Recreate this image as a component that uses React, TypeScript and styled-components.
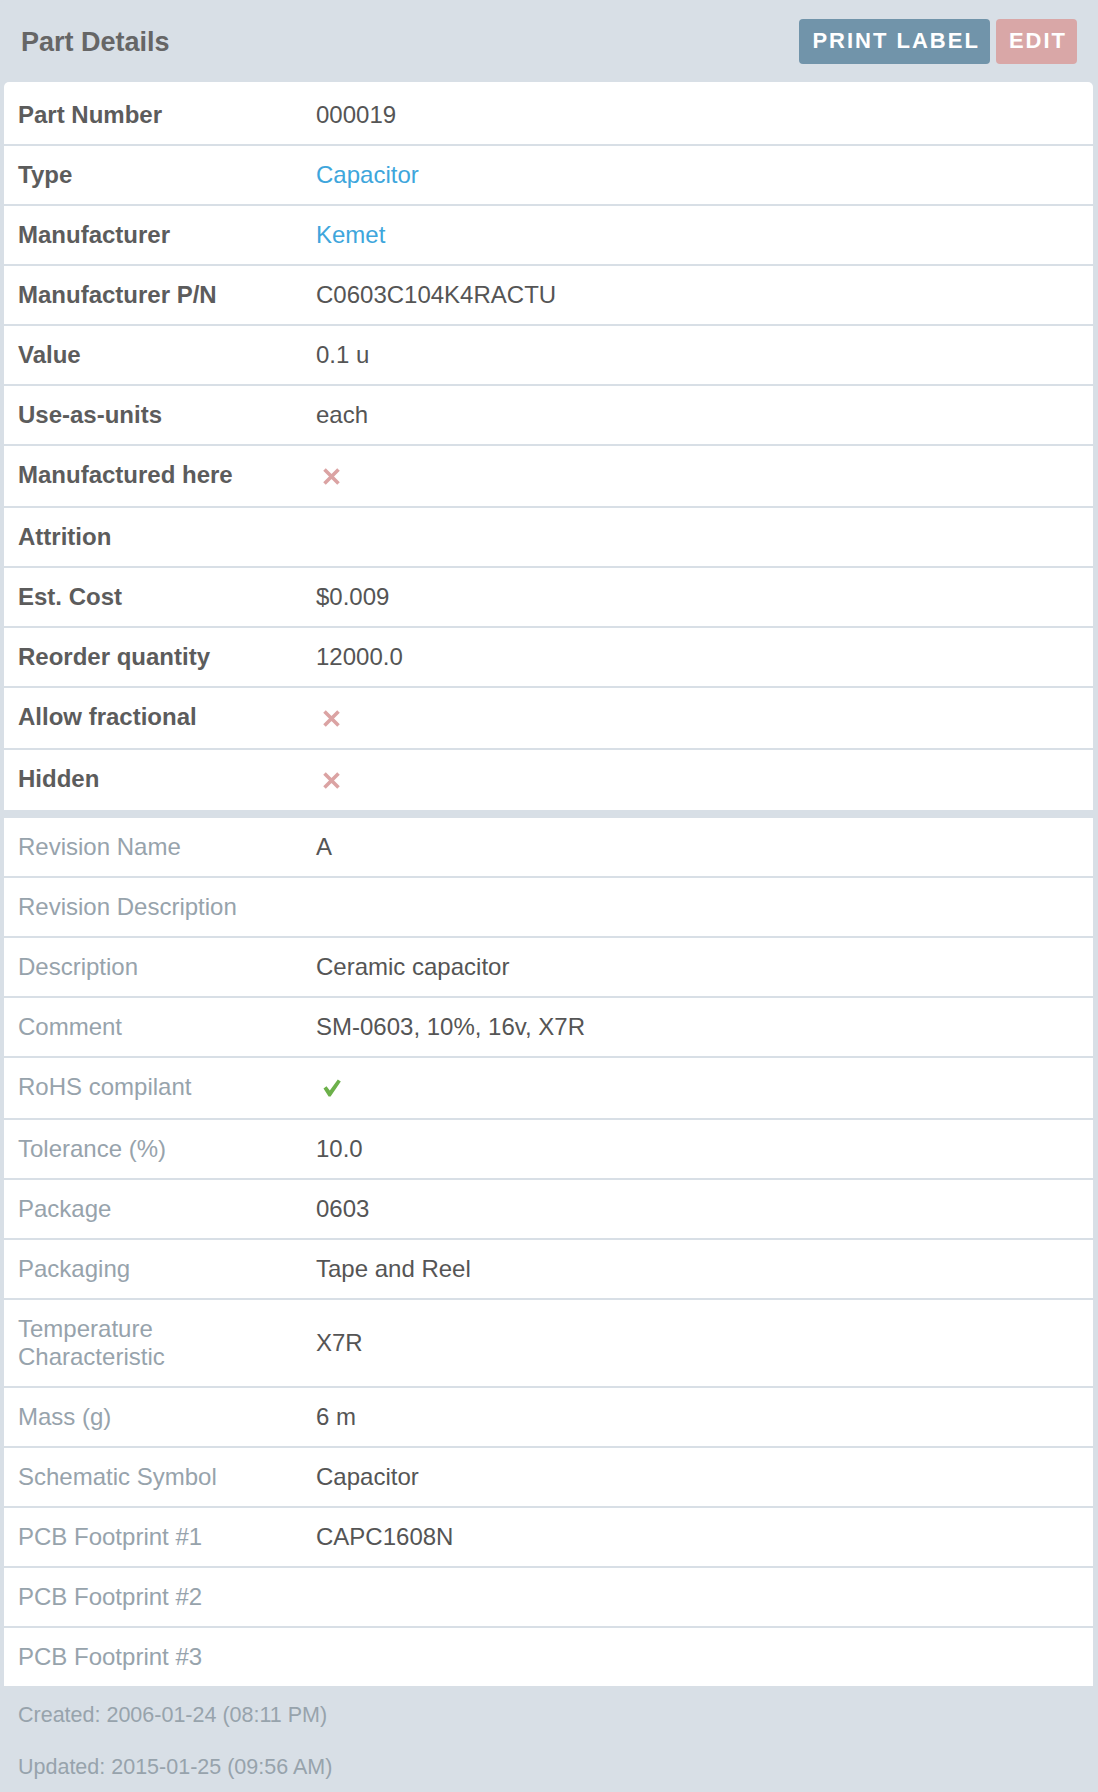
import styled, { createGlobalStyle } from "styled-components";

const GlobalStyle = createGlobalStyle`
  html, body {
    margin: 0;
    padding: 0;
    background: #d8dfe6;
  }
  body {
    font-family: "Liberation Sans", Arial, sans-serif;
  }
`;

const Panel = styled.section`
  background: #d8dfe6;
  border-radius: 6px 6px 0 0;
  padding: 0 5px 0 4px;
`;

const Header = styled.header`
  display: flex;
  align-items: center;
  justify-content: space-between;
  height: 82px;
  padding: 0 16px 0 17px;
  box-sizing: border-box;
`;

const Title = styled.h2`
  margin: 2px 0 0;
  font-size: 27px;
  font-weight: bold;
  color: #666;
`;

const Actions = styled.div`
  display: flex;
  gap: 6px;
`;

const Button = styled.button<{ $variant: "info" | "danger" }>`
  height: 45px;
  padding: 0 10px 0 13px;
  border: none;
  border-radius: 4px;
  background: ${(p) => (p.$variant === "info" ? "#7194aa" : "#d9a7a7")};
  color: #fff;
  font-family: "Liberation Sans", Arial, sans-serif;
  font-size: 22px;
  font-weight: bold;
  letter-spacing: 2px;
  cursor: pointer;
`;

const Table = styled.div<{ $first?: boolean }>`
  background: #fff;
  border-radius: ${(p) => (p.$first ? "5px 5px 0 0" : "0")};
  padding-top: ${(p) => (p.$first ? "4px" : "0")};
  margin-bottom: 6px;
`;

const Row = styled.div`
  display: grid;
  grid-template-columns: 298px 1fr;
  border-bottom: 2px solid #d8dfe6;
`;

const Label = styled.div<{ $muted?: boolean }>`
  padding: 15px 14px;
  line-height: 28px;
  font-size: 24px;
  font-weight: ${(p) => (p.$muted ? "normal" : "bold")};
  color: ${(p) => (p.$muted ? "#97a3ac" : "#5c5c5c")};
`;

const Value = styled.div`
  display: flex;
  align-items: center;
  padding: 15px 14px;
  line-height: 28px;
  font-size: 24px;
  color: #555;
`;

const ValueLink = styled.a`
  color: #3ea6dc;
  text-decoration: none;
`;

const IconBox = styled.span`
  display: flex;
  align-items: center;
  height: 30px;
  padding-left: 6px;
`;

const Footer = styled.footer`
  padding: 6px 14px 12px;
`;

const Stamp = styled.p`
  margin: 0 0 22px;
  line-height: 30px;
  font-size: 21.5px;
  color: #97a3ac;
`;

type Kind = "text" | "link" | "no" | "yes";
type Field = { label: string; value?: string; kind?: Kind };

const partFields: Field[] = [
  { label: "Part Number", value: "000019" },
  { label: "Type", value: "Capacitor", kind: "link" },
  { label: "Manufacturer", value: "Kemet", kind: "link" },
  { label: "Manufacturer P/N", value: "C0603C104K4RACTU" },
  { label: "Value", value: "0.1 u" },
  { label: "Use-as-units", value: "each" },
  { label: "Manufactured here", kind: "no" },
  { label: "Attrition" },
  { label: "Est. Cost", value: "$0.009" },
  { label: "Reorder quantity", value: "12000.0" },
  { label: "Allow fractional", kind: "no" },
  { label: "Hidden", kind: "no" },
];

const revisionFields: Field[] = [
  { label: "Revision Name", value: "A" },
  { label: "Revision Description" },
  { label: "Description", value: "Ceramic capacitor" },
  { label: "Comment", value: "SM-0603, 10%, 16v, X7R" },
  { label: "RoHS compilant", kind: "yes" },
  { label: "Tolerance (%)", value: "10.0" },
  { label: "Package", value: "0603" },
  { label: "Packaging", value: "Tape and Reel" },
  { label: "Temperature Characteristic", value: "X7R" },
  { label: "Mass (g)", value: "6 m" },
  { label: "Schematic Symbol", value: "Capacitor" },
  { label: "PCB Footprint #1", value: "CAPC1608N" },
  { label: "PCB Footprint #2" },
  { label: "PCB Footprint #3" },
];

const CrossIcon = () => (
  <svg width="19" height="19" viewBox="0 0 19 19">
    <path
      d="M2.5 2.5 L16.5 16.5 M16.5 2.5 L2.5 16.5"
      stroke="#dba3a3"
      strokeWidth="3.6"
    />
  </svg>
);

const CheckIcon = () => (
  <svg width="20" height="20" viewBox="0 0 20 20">
    <path
      d="M1.5 10.5 L4.5 8.2 L7.8 12.6 L15.8 1.5 L18.8 3.6 L8.6 18.5 L6.6 18.5 Z"
      fill="#6cb04a"
    />
  </svg>
);

const renderValue = (f: Field) => {
  switch (f.kind) {
    case "link":
      return <ValueLink href="#">{f.value}</ValueLink>;
    case "no":
      return (
        <IconBox>
          <CrossIcon />
        </IconBox>
      );
    case "yes":
      return (
        <IconBox>
          <CheckIcon />
        </IconBox>
      );
    default:
      return f.value;
  }
};

const App = () => {
  return (
    <>
      <GlobalStyle />
      <Panel>
        <Header>
          <Title>Part Details</Title>
          <Actions>
            <Button $variant="info">PRINT LABEL</Button>
            <Button $variant="danger">EDIT</Button>
          </Actions>
        </Header>

        <Table $first>
          {partFields.map((f) => (
            <Row key={f.label}>
              <Label>{f.label}</Label>
              <Value>{renderValue(f)}</Value>
            </Row>
          ))}
        </Table>

        <Table>
          {revisionFields.map((f) => (
            <Row key={f.label}>
              <Label $muted>{f.label}</Label>
              <Value>{renderValue(f)}</Value>
            </Row>
          ))}
        </Table>

        <Footer>
          <Stamp>Created: 2006-01-24 (08:11 PM)</Stamp>
          <Stamp>Updated: 2015-01-25 (09:56 AM)</Stamp>
        </Footer>
      </Panel>
    </>
  );
};

export default App;
